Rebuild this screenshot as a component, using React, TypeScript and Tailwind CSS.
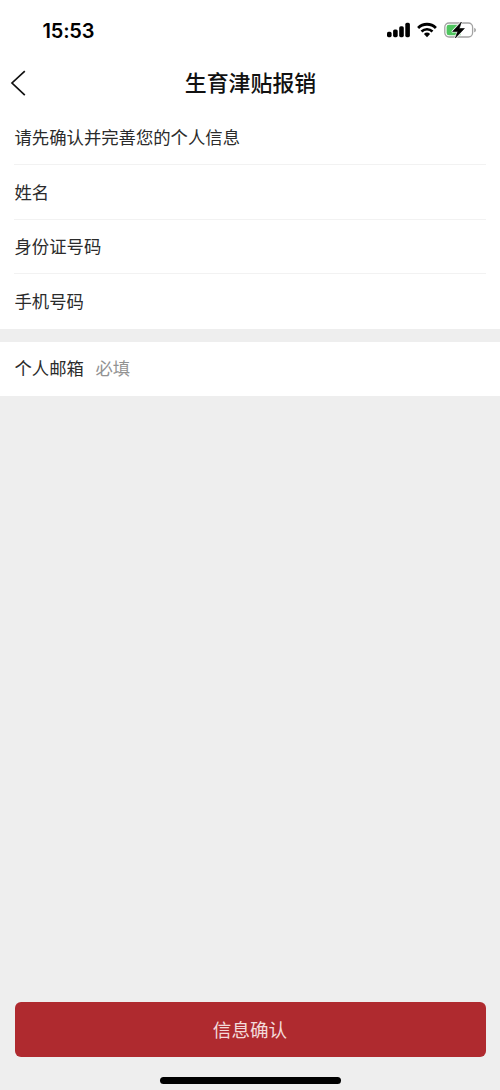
import * as React from "react";

const fields = ["姓名", "身份证号码", "手机号码"];

function StatusBar() {
  return (
    <div className="flex h-[60px] shrink-0 items-center justify-between pr-[23px] pl-[42.5px]">
      <span className="pt-px font-['Inter',sans-serif] text-[20px] leading-[24px] font-semibold tracking-[-0.2px] text-black">
        15:53
      </span>
      <div className="flex items-center">
        {/* Signal */}
        <svg className="mr-[7px]" width="23" height="16" viewBox="0 0 23 16" fill="#000">
          <rect x="0" y="9.8" width="4.6" height="5.4" rx="1.6" />
          <rect x="6.1" y="7.5" width="4.6" height="7.7" rx="1.6" />
          <rect x="12.2" y="4.3" width="4.6" height="10.9" rx="1.6" />
          <rect x="18.3" y="0.8" width="4.6" height="14.4" rx="1.6" />
        </svg>
        {/* Wi-Fi */}
        <svg className="mr-[7px]" width="20" height="16" viewBox="0 0 20 16" fill="none" stroke="#000">
          <path d="M1.1 5.9a12.7 12.7 0 0 1 17.8 0" strokeWidth="2.8" />
          <path d="M4.5 9.5a7.9 7.9 0 0 1 11 0" strokeWidth="2.6" />
          <path d="M10 15.2 6.9 12a4.5 4.5 0 0 1 6.2 0Z" fill="#000" stroke="none" />
        </svg>
        {/* Battery, charging */}
        <svg width="33" height="18" viewBox="0 0 33 18" fill="none">
          <rect x="0.8" y="2" width="27.8" height="14" rx="4.2" stroke="#a3a3a3" strokeWidth="1.3" />
          <path d="M30.2 6.7c2.3.8 2.3 3.8 0 4.6Z" fill="#a3a3a3" />
          <path d="M5 3.7h11.5v10.6H5a2.4 2.4 0 0 1-2.4-2.4V6.1A2.4 2.4 0 0 1 5 3.7Z" fill="#4fc55f" />
          <path
            d="M17.4 1 8.6 10.5h5l-2.2 6.5 9-9.5h-5.2Z"
            fill="#fff"
            stroke="#fff"
            strokeWidth="2"
            strokeLinejoin="round"
          />
          <path
            d="M17.4 1 8.6 10.5h5l-2.2 6.5 9-9.5h-5.2Z"
            fill="#000"
            stroke="#000"
            strokeWidth="0.6"
            strokeLinejoin="round"
          />
        </svg>
      </div>
    </div>
  );
}

function NavBar() {
  return (
    <header className="grid h-[50px] shrink-0 grid-cols-[50px_1fr_50px] items-center">
      <button type="button" aria-label="返回" className="pl-[10px]">
        <svg className="mt-[-4px]" width="17" height="28" viewBox="0 0 17 28" fill="none" stroke="#111" strokeWidth="1.7">
          <path d="M14.8 2.2 2 14l12.8 12.2" />
        </svg>
      </button>
      <h1 className="pb-1.5 pl-px text-center text-[21.9px] leading-[32px] font-medium text-[#111]">生育津贴报销</h1>
    </header>
  );
}

export default function App() {
  return (
    <div className="flex h-[1090px] w-[500px] flex-col bg-[#eee] font-['Noto_Sans_CJK_SC',sans-serif] text-[17.35px] leading-[26px] text-[#2b2b2b]">
      <div className="bg-white">
        <StatusBar />
        <NavBar />
        <div className="mx-[14px] flex h-[55px] items-center border-b border-[#f2f2f2] pl-[0.5px]">
          请先确认并完善您的个人信息
        </div>
        {fields.map((label) => (
          <div
            key={label}
            className="mx-[14px] flex h-[54.5px] items-center border-b border-[#f2f2f2] pl-[0.5px] last:border-b-0"
          >
            {label}
          </div>
        ))}
      </div>

      <div className="mt-[13px] flex h-[54px] items-center bg-white px-[14.5px] pb-px">
        <span>个人邮箱</span>
        <span className="ml-[11.5px] text-[#929292]">必填</span>
      </div>

      <div className="mt-auto pr-[14px] pl-[15px]">
        <button
          type="button"
          className="h-[55px] w-full rounded-[6px] bg-[#af2a2f] pr-px pb-0.5 text-[18.6px] text-[#f3dada]"
        >
          信息确认
        </button>
      </div>
      <div className="mx-auto mt-5 mb-[6px] h-[7px] w-[181px] shrink-0 rounded-full bg-black" />
    </div>
  );
}
